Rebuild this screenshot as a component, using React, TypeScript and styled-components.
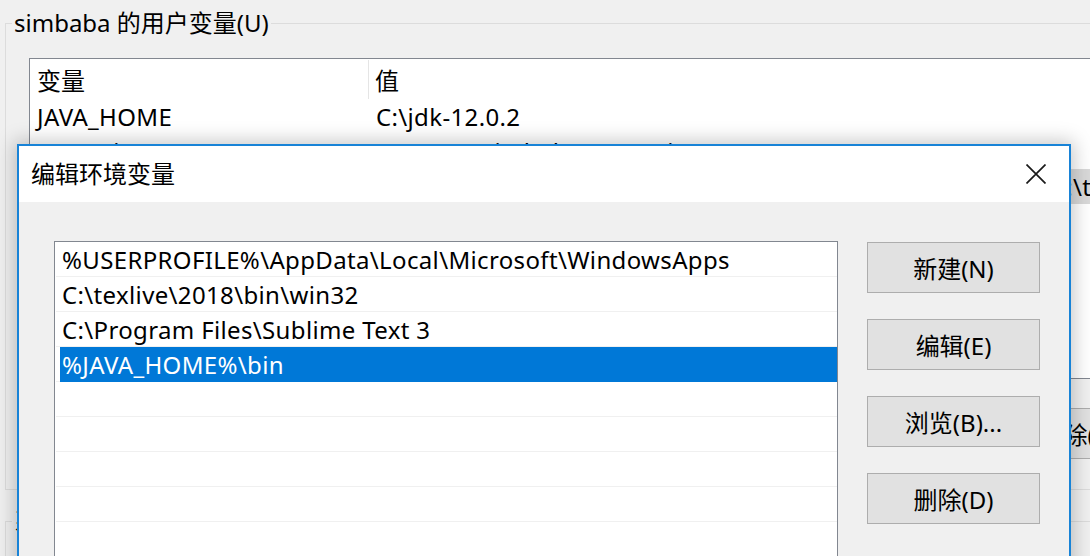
import React from "react";
import styled, { createGlobalStyle } from "styled-components";

const GlobalStyle = createGlobalStyle`
  html, body {
    margin: 0;
    padding: 0;
    background: #f0f0f0;
  }
  body {
    font-family: "Noto Sans", "Noto Sans CJK SC", sans-serif;
    font-size: 24px;
    color: #000;
    -webkit-font-smoothing: antialiased;
  }
  * { box-sizing: border-box; }
`;

const Desktop = styled.div`
  position: relative;
  width: 1090px;
  height: 556px;
  overflow: hidden;
  background: #f0f0f0;
`;

/* ---------- background window ---------- */

const BackWindow = styled.div`
  display: flex;
  flex-direction: column;
  padding-left: 5px;
  width: 1200px;
`;

const Group = styled.fieldset<{ $top: number }>`
  margin: ${(p) => p.$top}px 0 0 0;
  padding: 0;
  border: 1px solid #dcdcdc;
  min-width: 0;
`;

const GroupLegend = styled.legend`
  margin-left: 6px;
  padding: 0 2px;
  font-size: 24px;
  line-height: 30px;
  white-space: nowrap;
`;

const BgList = styled.div`
  margin: 20px 0 0 23px;
  width: 1160px;
  height: 321px;
  border: 1px solid #828790;
  background: #fff;
  display: flex;
  flex-direction: column;
`;

const BgHeader = styled.div`
  display: flex;
  height: 40px;
  align-items: stretch;
`;

const BgHeaderCell = styled.div<{ $w?: number }>`
  width: ${(p) => (p.$w ? `${p.$w}px` : "auto")};
  flex: ${(p) => (p.$w ? "none" : "1")};
  padding-left: ${(p) => (p.$w ? 7 : 6)}px;
  display: flex;
  align-items: center;
  border-right: ${(p) => (p.$w ? "1px solid #e5e5e5" : "none")};
  margin: 1px 0 0 0;
  white-space: nowrap;
`;

const BgRow = styled.div<{ $sel?: boolean }>`
  display: flex;
  height: 35px;
  align-items: center;
  background: ${(p) => (p.$sel ? "#d9d9d9" : "transparent")};
  white-space: nowrap;
`;

const BgCell = styled.div<{ $w?: number }>`
  width: ${(p) => (p.$w ? `${p.$w}px` : "auto")};
  flex: ${(p) => (p.$w ? "none" : "1")};
  padding-left: 7px;
  letter-spacing: 0.35px;
  overflow: hidden;
`;

const BgButtons = styled.div`
  display: flex;
  gap: 10px;
  margin: 29px 0 30px 621px;
`;

const Button = styled.div`
  width: 173px;
  height: 51px;
  flex: none;
  border: 1px solid #adadad;
  background: #e1e1e1;
  display: flex;
  align-items: center;
  justify-content: center;
  font-size: 24px;
  white-space: nowrap;
`;

const GroupBody = styled.div`
  height: 120px;
`;

/* ---------- dialog ---------- */

const Dialog = styled.div`
  position: absolute;
  left: 17px;
  top: 144px;
  width: 1054px;
  height: 470px;
  border: 2px solid #1883d7;
  background: #f0f0f0;
  box-shadow: 0 0 18px 3px rgba(0, 0, 0, 0.22);
  display: flex;
  flex-direction: column;
`;

const TitleBar = styled.div`
  height: 56px;
  background: #fff;
  display: flex;
  align-items: center;
  justify-content: space-between;
  padding-left: 12px;
`;

const Title = styled.div`
  font-size: 24px;
  line-height: 30px;
`;

const CloseButton = styled.div`
  width: 66px;
  height: 100%;
  display: flex;
  align-items: center;
  justify-content: center;
  padding-top: 1px;
  margin-top: -2px;
`;

const DialogBody = styled.div`
  display: flex;
  align-items: flex-start;
  padding: 39px 29px 0 35px;
  gap: 29px;
`;

const PathList = styled.div`
  width: 784px;
  height: 330px;
  border: 1px solid #828790;
  border-bottom: none;
  background: #fff;
  display: flex;
  flex-direction: column;
  padding-left: 1px;
`;

const PathRow = styled.div`
  height: 35px;
  flex: none;
  display: flex;
  border-bottom: 1px solid #f0f0f0;
`;

const PathItem = styled.div<{ $sel?: boolean }>`
  flex: 1;
  margin-left: 4px;
  padding-left: 2px;
  margin-bottom: ${(p) => (p.$sel ? "-1px" : "0")};
  display: flex;
  align-items: center;
  letter-spacing: 0.35px;
  background: ${(p) => (p.$sel ? "#0078d7" : "transparent")};
  color: ${(p) => (p.$sel ? "#fff" : "#000")};
  white-space: nowrap;
`;

const ButtonColumn = styled.div`
  display: flex;
  flex-direction: column;
  gap: 26px;
  margin-top: 1px;
`;

const CloseIcon = () => (
  <svg width="20" height="20" viewBox="0 0 20 20">
    <path d="M0.5 0.5 L19.5 19.5 M19.5 0.5 L0.5 19.5" stroke="#1a1a1a" strokeWidth="1.7" fill="none" />
  </svg>
);

const paths = [
  "%USERPROFILE%\\AppData\\Local\\Microsoft\\WindowsApps",
  "C:\\texlive\\2018\\bin\\win32",
  "C:\\Program Files\\Sublime Text 3",
  "%JAVA_HOME%\\bin",
  "",
  "",
  "",
  "",
  "",
];

const userVars: [string, string, boolean][] = [
  ["JAVA_HOME", "C:\\jdk-12.0.2", false],
  ["OneDrive", "C:\\Users\\simbaba\\OneDrive", false],
  [
    "Path",
    "%USERPROFILE%\\AppData\\Local\\Microsoft\\WindowsApps;C:\\texlive\\2018\\bin\\win32;C:\\Program Files\\Sublime Text 3;%JAVA_HOME%\\bin",
    true,
  ],
  ["TEMP", "%USERPROFILE%\\AppData\\Local\\Temp", false],
  ["TMP", "%USERPROFILE%\\AppData\\Local\\Temp", false],
];

export default function App() {
  return (
    <>
      <GlobalStyle />
      <Desktop>
        <BackWindow>
          <Group $top={8}>
            <GroupLegend>simbaba 的用户变量(U)</GroupLegend>
            <BgList>
              <BgHeader>
                <BgHeaderCell $w={339}>变量</BgHeaderCell>
                <BgHeaderCell>值</BgHeaderCell>
              </BgHeader>
              {userVars.map(([n, v, sel]) => (
                <BgRow key={n} $sel={sel}>
                  <BgCell $w={339}>{n}</BgCell>
                  <BgCell>{v}</BgCell>
                </BgRow>
              ))}
            </BgList>
            <BgButtons>
              <Button>新建(N)...</Button>
              <Button>编辑(E)...</Button>
              <Button>删除(D)</Button>
            </BgButtons>
          </Group>
          <Group $top={16}>
            <GroupLegend>系统变量(S)</GroupLegend>
            <GroupBody />
          </Group>
        </BackWindow>

        <Dialog>
          <TitleBar>
            <Title>编辑环境变量</Title>
            <CloseButton>
              <CloseIcon />
            </CloseButton>
          </TitleBar>
          <DialogBody>
            <PathList>
              {paths.map((p, i) => (
                <PathRow key={i}>
                  <PathItem $sel={i === 3}>{p}</PathItem>
                </PathRow>
              ))}
            </PathList>
            <ButtonColumn>
              <Button>新建(N)</Button>
              <Button>编辑(E)</Button>
              <Button>浏览(B)...</Button>
              <Button>删除(D)</Button>
            </ButtonColumn>
          </DialogBody>
        </Dialog>
      </Desktop>
    </>
  );
}
